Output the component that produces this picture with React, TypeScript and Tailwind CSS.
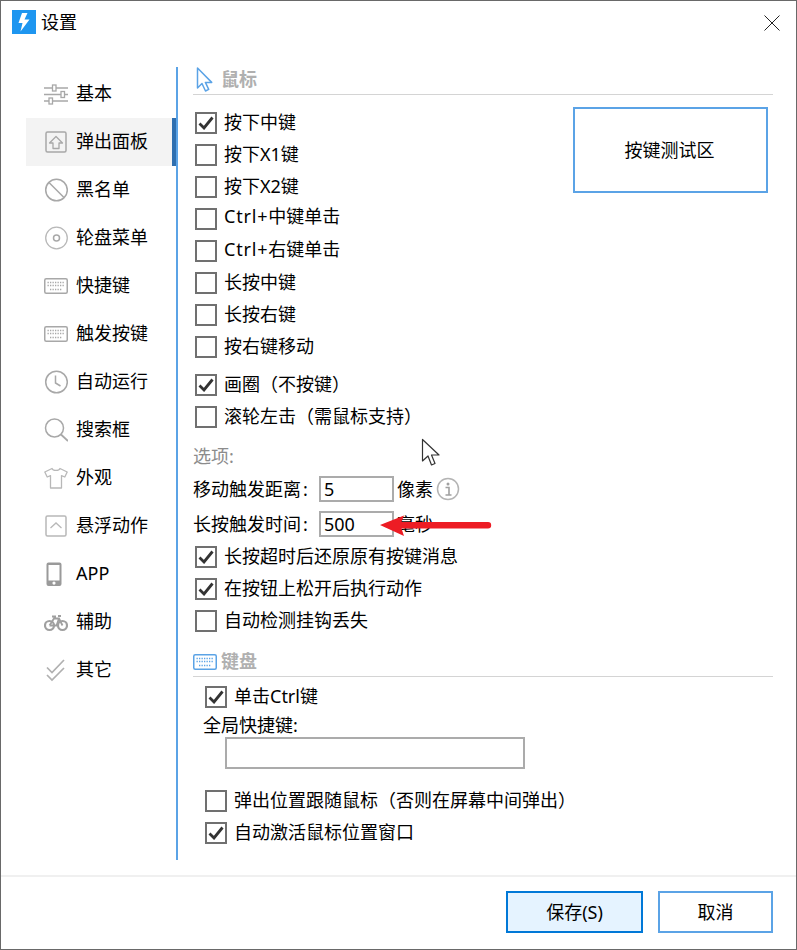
import React from "react";

const G = "#a8a8a8";

function Svg({ w = 24, h = 24, children }: { w?: number; h?: number; children: React.ReactNode }) {
  return (
    <svg width={w} height={h} viewBox={`0 0 ${w} ${h}`} fill="none" className="block shrink-0">
      {children}
    </svg>
  );
}

const Sliders = () => (
  <Svg>
    <g stroke={G} strokeWidth="1.3">
      <path d="M0 6h24M0 12.500h24M0 19h24" />
      <rect x="8.500" y="3" width="3.500" height="6" fill="#fff" />
      <rect x="17" y="9.500" width="3.500" height="6" fill="#fff" />
      <rect x="5" y="16" width="3.500" height="6" fill="#fff" />
    </g>
  </Svg>
);
const UpBox = () => (
  <Svg>
    <rect x="2" y="2" width="20" height="20" rx="1.500" stroke={G} strokeWidth="1.500" />
    <path d="M12 6.500L18.500 13H15v5.500H9V13H5.500z" stroke={G} strokeWidth="1.300" strokeLinejoin="round" />
  </Svg>
);
const Ban = () => (
  <Svg>
    <circle cx="12.500" cy="12" r="10.800" stroke={G} strokeWidth="1.500" />
    <path d="M5 4.500L20 19.500" stroke={G} strokeWidth="1.500" />
  </Svg>
);
const Disc = () => (
  <Svg>
    <circle cx="12.500" cy="12" r="10.800" stroke="#b8b8b8" strokeWidth="1.300" />
    <circle cx="12.500" cy="12" r="3" stroke={G} strokeWidth="1.500" />
  </Svg>
);
const Keyboard = ({ color = G }: { color?: string }) => (
  <Svg h={16}>
    <rect x="0.750" y="0.750" width="22.500" height="14.500" rx="1.500" stroke={color} strokeWidth="1.500" />
    <path d="M3.500 4.500h17M3.500 7.500h17" stroke={color} strokeWidth="1.300" strokeDasharray="1.300 1.200" />
    <path d="M6 11.500h12" stroke={color} strokeWidth="1.300" strokeDasharray="1.300 1.200" />
  </Svg>
);
const Clock = () => (
  <Svg>
    <circle cx="12.500" cy="12" r="10.800" stroke={G} strokeWidth="1.500" />
    <path d="M11.500 5.500v7.500l5 3" stroke={G} strokeWidth="1.500" />
  </Svg>
);
const Search = () => (
  <Svg>
    <circle cx="10.500" cy="10" r="9" stroke={G} strokeWidth="1.500" />
    <path d="M17 16.500l7 6.500" stroke={G} strokeWidth="1.800" />
  </Svg>
);
const Shirt = () => (
  <Svg>
    <path
      d="M8 2.500L0.800 6l2.400 5 3.300-1.400V22h11V9.600l3.300 1.400 2.400-5L16 2.500c-1 2.600-7 2.600-8 0z"
      stroke="#b8b8b8"
      strokeWidth="1.300"
      strokeLinejoin="round"
    />
  </Svg>
);
const ChevBox = () => (
  <Svg>
    <rect x="2" y="2" width="20" height="20" rx="1.500" stroke="#b8b8b8" strokeWidth="1.500" />
    <path d="M6.500 14L12 9l5.500 5" stroke="#b8b8b8" strokeWidth="1.300" />
  </Svg>
);
const Phone = () => (
  <Svg>
    <path
      fillRule="evenodd"
      clipRule="evenodd"
      d="M4.500 0.500h11a2 2 0 012 2v19.500a2 2 0 01-2 2h-11a2 2 0 01-2-2V2.500a2 2 0 012-2zM4.500 3v15.500h11V3zM10 19.500a1.600 1.600 0 100 3.200 1.600 1.600 0 000-3.200z"
      fill="#9a9a9a"
    />
  </Svg>
);
const Bike = () => (
  <Svg>
    <g stroke="#a0a0a0" strokeWidth="2.200">
      <circle cx="5.500" cy="15.500" r="4.500" />
      <circle cx="18.500" cy="15.500" r="4.500" />
      <path d="M5.500 15.500L10 8.500h5l3.500 7M5.500 15.500h7L15 8.500M8 6.500h4M14 6h3" strokeWidth="1.800" />
    </g>
  </Svg>
);
const Checks = () => (
  <Svg>
    <path d="M3 9.500l5 5L20 2M3 17l5 5L20 10" stroke="#b0b0b0" strokeWidth="1.700" />
  </Svg>
);

const navItems: [string, React.ReactNode][] = [
  ["基本", <Sliders />],
  ["弹出面板", <UpBox />],
  ["黑名单", <Ban />],
  ["轮盘菜单", <Disc />],
  ["快捷键", <Keyboard />],
  ["触发按键", <Keyboard />],
  ["自动运行", <Clock />],
  ["搜索框", <Search />],
  ["外观", <Shirt />],
  ["悬浮动作", <ChevBox />],
  ["APP", <Phone />],
  ["辅助", <Bike />],
  ["其它", <Checks />],
];

function Check({
  label,
  on = false,
  shift = "-translate-y-px",
  lead,
}: {
  label: string;
  on?: boolean;
  shift?: string;
  lead?: string;
}) {
  return (
    <div className="flex h-8 items-center">
      <div className="flex h-[22px] w-[22px] shrink-0 items-center justify-center border-2 border-[#707070] bg-white">
        {on && (
          <svg width="16" height="14" viewBox="0 0 16 14" fill="none" className="block">
            <path d="M1.500 7.500L6 12L14.500 1.500" stroke="#333" strokeWidth="2.800" />
          </svg>
        )}
      </div>
      <span className={`ml-[7px] whitespace-nowrap ${shift}`}>
        {lead && <span className="tracking-[0.8px]">{lead}</span>}
        {label}
      </span>
    </div>
  );
}

function Heading({ icon, label, shift }: { icon: React.ReactNode; label: string; shift: string }) {
  return (
    <div className="flex items-center gap-1 border-b border-[#d4d4d4]">
      {icon}
      <span className={`font-bold text-[#b0b0b0] ${shift}`}>{label}</span>
    </div>
  );
}

function Field({ label, value, unit }: { label: string; value: string; unit: string }) {
  return (
    <div className="flex h-[26px] items-center">
      <span className="flex w-[126px] whitespace-nowrap">
        {label}
        <span className="ml-[2px]">:</span>
      </span>
      <div className="flex h-[26px] w-[75px] items-center border-2 border-[#ababab] pl-[3px]">{value}</div>
      <span className="ml-[3px] whitespace-nowrap">{unit}</span>
      {unit === "像素" && (
        <svg width="24" height="24" viewBox="0 0 24 24" fill="none" className="ml-[3px] block">
          <circle cx="12" cy="12" r="10.500" stroke="#b4b4b4" strokeWidth="1.500" />
          <circle cx="12" cy="7" r="1.500" fill="#a0a0a0" />
          <path d="M9.500 10.500H13V17.500M9.500 18H15.500" stroke="#a0a0a0" strokeWidth="1.600" />
        </svg>
      )}
    </div>
  );
}

export default function App() {
  return (
    <div
      className="relative flex h-[950px] w-[797px] flex-col overflow-hidden border border-[#696969] bg-white text-[18px] leading-none text-black"
      style={{ fontFamily: '"Noto Sans","Noto Sans CJK SC",sans-serif' }}
    >
      <div className="flex h-[66px] shrink-0 items-start justify-between pl-[11px] pr-[16px] pt-[9px]">
        <div className="flex items-center gap-[5px]">
          <svg width="24" height="24" viewBox="0 0 24 24" className="block">
            <rect width="24" height="24" fill="#1e96f0" />
            <path d="M10 3h5.500L12.500 9.500H17.500L8.500 21.500L10.500 13H6.500z" fill="#fff" />
          </svg>
          <span>设置</span>
        </div>
        <svg width="16" height="16" viewBox="0 0 16 16" fill="none" className="mt-[5px] block">
          <path d="M0.500 0.500L15.500 15.500M15.500 0.500L0.500 15.500" stroke="#222" strokeWidth="1" />
        </svg>
      </div>

      <div className="flex h-[793px] shrink-0">
        <nav className="ml-[25px] h-full w-[152px] shrink-0 border-r-2 border-[#5ba3e6] pt-[3px]">
          {navItems.map(([label, icon], i) => (
            <div
              key={label}
              className={
                i === 1
                  ? "flex h-12 items-center gap-2 border-r-4 border-[#2f6fb0] bg-[#f3f3f3] pl-[18px]"
                  : "flex h-12 items-center gap-2 pl-[18px]"
              }
            >
              <div className="flex w-6 justify-center">{icon}</div>
              <span className="-translate-y-px whitespace-nowrap">{label}</span>
            </div>
          ))}
        </nav>

        <main className="ml-[15px] w-[580px] shrink-0">
          <Heading
            label="鼠标"
            shift="-translate-y-0.5"
            icon={
              <div className="h-[27px] w-6">
                <svg width="24" height="27" viewBox="0 0 24 27" fill="none" className="block">
                  <path
                    d="M4.500 1v20l4.500-4.500 3.500 7.500 3.200-1.600-3.300-7h6.300z"
                    stroke="#5ba3e6"
                    strokeWidth="1.500"
                    strokeLinejoin="round"
                  />
                </svg>
              </div>
            }
          />
          <div className="flex pl-[2px] pt-3">
            <div className="w-[378px] shrink-0">
              <Check label="按下中键" on />
              <Check label="按下X1键" />
              <Check label="按下X2键" />
              <Check lead="Ctrl+" label="中键单击" shift="-translate-y-[3px]" />
              <Check lead="Ctrl+" label="右键单击" shift="-translate-y-0.5" />
              <Check label="长按中键" />
              <Check label="长按右键" />
              <Check label="按右键移动" />
            </div>
            <div className="flex h-[86px] w-[195px] items-center justify-center border-2 border-[#5ba3e6] pr-0.5">
              按键测试区
            </div>
          </div>
          <div className="pl-[2px] pt-[6px]">
            <Check label="画圈（不按键）" on />
            <Check label="滚轮左击（需鼠标支持）" />
          </div>
          <div className="mt-[10px] flex h-[26px] items-center text-[#8c8c8c]">选项:</div>
          <div className="mt-[7px] flex flex-col gap-[9px]">
            <Field label="移动触发距离" value="5" unit="像素" />
            <Field label="长按触发时间" value="500" unit="毫秒" />
          </div>
          <div className="pl-[2px] pt-1">
            <Check label="长按超时后还原原有按键消息" on />
            <Check label="在按钮上松开后执行动作" on />
            <Check label="自动检测挂钩丢失" />
          </div>
          <div className="mt-[11px]">
            <Heading
              label="键盘"
              shift="-translate-y-px"
              icon={
                <div className="flex h-[28px] w-6 items-center">
                  <Keyboard color="#5ba3e6" />
                </div>
              }
            />
          </div>
          <div className="pl-3 pt-1">
            <Check label="单击Ctrl键" on />
            <div className="-ml-[2px] flex h-6 items-center">全局快捷键:</div>
            <div className="ml-5 h-8 w-[300px] border-2 border-[#ababab]" />
            <div className="mt-4">
              <Check label="弹出位置跟随鼠标（否则在屏幕中间弹出）" />
              <Check label="自动激活鼠标位置窗口" on />
            </div>
          </div>
        </main>
      </div>

      <div className="mt-[15px] flex flex-1 justify-end gap-[15px] border-t-2 border-[#f0f0f0] pr-[23px] pt-[14px]">
        <button className="flex h-[42px] w-[137px] items-center justify-center border-2 border-[#0078d7] bg-[#e5f3ff]">
          保存(S)
        </button>
        <button className="flex h-[42px] w-[115px] items-center justify-center border-2 border-[#5ba3e6] bg-white">
          取消
        </button>
      </div>

      <svg width="22" height="30" viewBox="0 0 22 30" fill="none" className="absolute left-[420px] top-[437px] block">
        <path d="M1.500 1.500v21.500l5.500-5 3.500 9 3.500-1.500-3.500-8.500h7.500z" fill="#fff" stroke="#333" strokeWidth="1.200" strokeLinejoin="round" />
      </svg>
      <svg width="112" height="23" viewBox="0 0 112 23" className="absolute left-[379px] top-[513px] block">
        <path d="M0 11L24 1.500 21.500 8 108 8a3.200 3.200 0 010 6.400L21.500 14.500 24 22z" fill="#ed1c24" />
      </svg>
    </div>
  );
}
